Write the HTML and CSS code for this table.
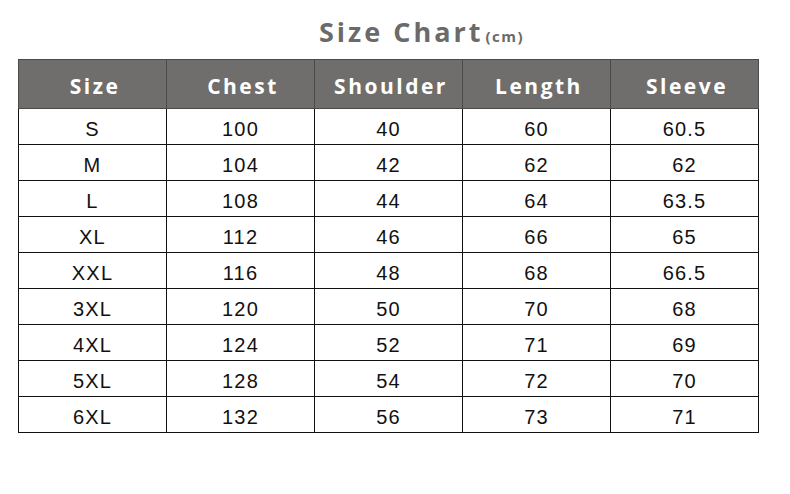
FILE: index.html
```html
<!DOCTYPE html>
<html>
<head>
<meta charset="utf-8">
<link rel="stylesheet" href="styles.css">
</head>
<body>
<div class="page">
  <h1 class="title">Size Chart<span class="unit">(cm)</span></h1>
  <table class="chart">
    <thead>
      <tr><th>Size</th><th>Chest</th><th>Shoulder</th><th>Length</th><th>Sleeve</th></tr>
    </thead>
    <tbody>
      <tr><td>S</td><td>100</td><td>40</td><td>60</td><td>60.5</td></tr>
      <tr><td>M</td><td>104</td><td>42</td><td>62</td><td>62</td></tr>
      <tr><td>L</td><td>108</td><td>44</td><td>64</td><td>63.5</td></tr>
      <tr><td>XL</td><td>112</td><td>46</td><td>66</td><td>65</td></tr>
      <tr><td>XXL</td><td>116</td><td>48</td><td>68</td><td>66.5</td></tr>
      <tr><td>3XL</td><td>120</td><td>50</td><td>70</td><td>68</td></tr>
      <tr><td>4XL</td><td>124</td><td>52</td><td>71</td><td>69</td></tr>
      <tr><td>5XL</td><td>128</td><td>54</td><td>72</td><td>70</td></tr>
      <tr><td>6XL</td><td>132</td><td>56</td><td>73</td><td>71</td></tr>
    </tbody>
  </table>
</div>
</body>
</html>
```

FILE: styles.css
```css
html, body {
  margin: 0;
  padding: 0;
  background: #ffffff;
}
.page {
  width: 790px;
  height: 494px;
  padding: 0 0 0 18px;
  box-sizing: border-box;
}
.title {
  margin: 0;
  height: 59px;
  box-sizing: border-box;
  padding: 14px 0 0 301px;
  font-family: "Open Sans", sans-serif;
  font-weight: 700;
  font-size: 27px;
  letter-spacing: 3px;
  color: #6a6a6a;
  line-height: 36px;
}
.unit {
  font-size: 15px;
  letter-spacing: 1.5px;
  margin-left: 2px;
}
.chart {
  border-collapse: collapse;
  table-layout: fixed;
  width: 741px;
}
.chart th, .chart td {
  padding: 0;
  text-align: center;
}
.chart th {
  height: 49px;
  padding: 4px 0 0 5px;
  box-sizing: border-box;
  background: #6f6e6d;
  color: #ffffff;
  font-family: "Open Sans", sans-serif;
  font-weight: 700;
  font-size: 21px;
  letter-spacing: 2.5px;
  border: 1px solid #4a4a4a;
}
.chart td {
  height: 36px;
  padding-top: 6px;
  box-sizing: border-box;
  border: 1px solid #111111;
  font-family: "Liberation Sans", Arial, sans-serif;
  font-size: 20px;
  letter-spacing: 1.2px;
  color: #111111;
}
```
